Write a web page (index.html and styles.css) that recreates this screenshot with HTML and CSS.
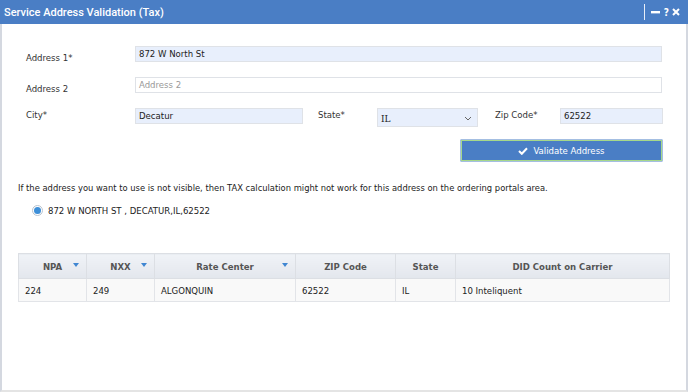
FILE: index.html
```html
<!DOCTYPE html>
<html>
<head>
<meta charset="utf-8">
<link rel="stylesheet" href="styles.css">
</head>
<body>
<div class="window">
  <div class="titlebar">
    <span class="title">Service Address Validation (Tax)</span>
    <span class="sep"></span>
    <span class="ctrl">
      <svg width="9" height="3" viewBox="0 0 9 3"><rect x="0" y="0" width="9" height="2.4" fill="#fff"/></svg>
      <span class="q">?</span>
      <svg width="8" height="8" viewBox="0 0 8 8"><path d="M1 1 L7 7 M7 1 L1 7" stroke="#fff" stroke-width="2"/></svg>
    </span>
  </div>
  <div class="content">
    <div class="row r1">
      <label class="lbl">Address 1*</label>
      <div class="inp filled grow">872 W North St</div>
    </div>
    <div class="row r2">
      <label class="lbl">Address 2</label>
      <div class="inp empty grow">Address 2</div>
    </div>
    <div class="row r3">
      <label class="lbl">City*</label>
      <div class="inp filled city">Decatur</div>
      <label class="lbl2 state-l">State*</label>
      <div class="select"><span class="sv">IL</span>
        <svg width="8" height="5" viewBox="0 0 8 5"><path d="M1 1 L4 4 L7 1" fill="none" stroke="#666" stroke-width="1"/></svg>
      </div>
      <label class="lbl2 zip-l">Zip Code*</label>
      <div class="inp filled zip">62522</div>
    </div>
    <div class="btnrow">
      <div class="btn">
        <svg width="10" height="8" viewBox="0 0 10 8"><path d="M1 4 L3.8 6.8 L9 1.2" fill="none" stroke="#fff" stroke-width="2"/></svg>
        <span>Validate Address</span>
      </div>
    </div>
    <p class="info">If the address you want to use is not visible, then TAX calculation might not work for this address on the ordering portals area.</p>
    <div class="radio-row">
      <span class="radio"><span class="dot"></span></span>
      <span>872 W NORTH ST , DECATUR,IL,62522</span>
    </div>
    <table class="grid">
      <thead>
        <tr>
          <th class="c1">NPA<span class="arr"></span></th>
          <th class="c2">NXX<span class="arr"></span></th>
          <th class="c3">Rate Center<span class="arr"></span></th>
          <th class="c4">ZIP Code</th>
          <th class="c5">State</th>
          <th class="c6">DID Count on Carrier</th>
        </tr>
      </thead>
      <tbody>
        <tr>
          <td>224</td>
          <td>249</td>
          <td>ALGONQUIN</td>
          <td>62522</td>
          <td>IL</td>
          <td>10 Inteliquent</td>
        </tr>
      </tbody>
    </table>
  </div>
</div>
</body>
</html>
```
FILE: styles.css
```css
* { box-sizing: border-box; }
html, body { margin: 0; padding: 0; background: #fff; }
body {
  font-family: "DejaVu Sans Condensed", "DejaVu Sans", Verdana, sans-serif;
  font-stretch: condensed;
  font-size: 9.5px;
  color: #333;
}
.window {
  width: 688px;
  height: 392px;
  border-left: 2px solid #d4d8e0;
  border-right: 2px solid #d4d8e0;
  border-bottom: 2px solid #e4e4e4;
  display: flex;
  flex-direction: column;
}
.titlebar {
  height: 24px;
  flex: none;
  background: #4a7ec5;
  display: flex;
  align-items: center;
  padding: 0 8px 0 4px;
  color: #fff;
  margin-left: -2px;
  margin-right: -2px;
}
.title {
  font-family: Roboto, "Open Sans", sans-serif;
  font-stretch: normal;
  font-weight: 500;
  font-size: 11px;
  flex: 1;
}
.sep {
  width: 1px;
  height: 16px;
  background: #e8eef8;
  margin-right: 6px;
}
.ctrl {
  display: flex;
  align-items: center;
  gap: 3px;
  font-weight: bold;
  font-size: 10px;
  color: #fff;
}
.ctrl .q { margin-left: 1px; }
.content {
  padding: 22px 24px 0 16px;
  flex: 1;
}
.row {
  display: flex;
  align-items: flex-start;
  padding-left: 8px;
  height: 16px;
}
.lbl {
  width: 109px;
  flex: none;
  padding-top: 5px;
  line-height: 13px;
}
.r3 .lbl, .r3 .lbl2 { padding-top: 0; }
.lbl2 { flex: none; line-height: 13px; }
.inp {
  height: 16px;
  border: 1px solid #dfe2e7;
  padding: 0 3px;
  line-height: 14px;
  color: #222;
}
.filled { background: #e8effc; }
.empty { background: #fff; color: #999; }
.grow { flex: 1; }
.r2 { margin-top: 15px; }
.r3 { margin-top: 15px; }
.city { width: 168px; flex: none; }
.state-l { margin-left: 15px; width: 59px; }
.select {
  width: 101px;
  height: 19px;
  flex: none;
  border: 1px solid #dfe2e7;
  background: #e8effc;
  display: flex;
  align-items: center;
  justify-content: space-between;
  padding: 2px 5px 0 3px;
  font-family: "DejaVu Serif", serif;
  font-stretch: normal;
  font-size: 9px;
  color: #222;
}
.zip-l { margin-left: 17px; width: 65px; }
.zip { width: 103px; flex: none; }
.btnrow {
  display: flex;
  justify-content: flex-end;
  margin-top: 16px;
}
.btn {
  width: 201px;
  height: 21px;
  background: #4a7ec5;
  border: 1.5px solid #a6d88a;
  box-shadow: 0 0 0 0.5px #4a7ec5;
  display: flex;
  align-items: center;
  justify-content: center;
  gap: 5px;
  color: #fff;
  font-size: 9.5px;
}
.info {
  margin: 20px 0 0 0;
  line-height: 13px;
  font-size: 9.3px;
  color: #222;
}
.radio-row {
  display: flex;
  align-items: center;
  gap: 5px;
  margin-top: 11px;
  margin-left: 14px;
  color: #222;
}
.radio {
  width: 11px;
  height: 11px;
  border-radius: 50%;
  border: 1px solid #b9c3cf;
  background: #fff;
  display: flex;
  align-items: center;
  justify-content: center;
}
.dot {
  width: 7px;
  height: 7px;
  border-radius: 50%;
  background: #3d8fd8;
}
.grid {
  margin-top: 37px;
  width: 652px;
  border-collapse: collapse;
  font-size: 9.5px;
}
.grid th {
  height: 25px;
  background: linear-gradient(#f0f3f7, #e3e7ed);
  border: 1px solid #dcdfe4;
  color: #555;
  font-weight: bold;
  text-align: center;
  position: relative;
  padding: 0;
}
.grid td {
  height: 23px;
  background: #f9f9f9;
  border: 1px solid #e2e4e8;
  padding: 0 0 0 6px;
  color: #222;
}
.c1 { width: 68px; }
.c2 { width: 68px; }
.c3 { width: 141px; }
.c4 { width: 100px; }
.c5 { width: 60px; }
.arr {
  position: absolute;
  right: 7px;
  top: 9px;
  width: 0;
  height: 0;
  border-left: 3.5px solid transparent;
  border-right: 3.5px solid transparent;
  border-top: 4px solid #3f86d2;
}
```
